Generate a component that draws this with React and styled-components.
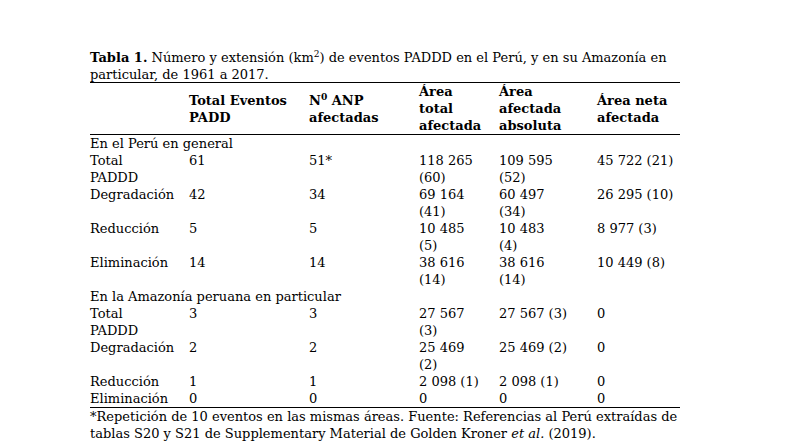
import React from 'react';
import styled, { createGlobalStyle } from 'styled-components';

const GlobalStyle = createGlobalStyle`
  html, body {
    margin: 0;
    padding: 0;
    background: #ffffff;
  }
  body {
    font-family: "DejaVu Serif", serif;
    color: #000;
  }
`;

const columns = [99, 120, 110, 80, 98, 83];

const headers = [
  '',
  'Total Eventos\nPADD',
  null,
  'Área\ntotal\nafectada',
  'Área\nafectada\nabsoluta',
  'Área neta\nafectada',
];

const sections = [
  {
    title: 'En el Perú en general',
    rows: [
      ['Total\nPADDD', '61', '51*', '118 265\n(60)', '109 595\n(52)', '45 722 (21)'],
      ['Degradación', '42', '34', '69 164\n(41)', '60 497\n(34)', '26 295 (10)'],
      ['Reducción', '5', '5', '10 485\n(5)', '10 483\n(4)', '8 977 (3)'],
      ['Eliminación', '14', '14', '38 616\n(14)', '38 616\n(14)', '10 449 (8)'],
    ],
  },
  {
    title: 'En la Amazonía peruana en particular',
    rows: [
      ['Total\nPADDD', '3', '3', '27 567\n(3)', '27 567 (3)', '0'],
      ['Degradación', '2', '2', '25 469\n(2)', '25 469 (2)', '0'],
      ['Reducción', '1', '1', '2 098 (1)', '2 098 (1)', '0'],
      ['Eliminación', '0', '0', '0', '0', '0'],
    ],
  },
];

const Page = styled.div`
  padding: 49px 0 0 90px;
  width: 590px;
  font-size: 13px;
  line-height: 17px;
`;

const Caption = styled.p`
  margin: 0;
  white-space: nowrap;
`;

const Label = styled.strong`
  font-weight: bold;
`;

const Sup = styled.sup`
  font-size: 0.7em;
  line-height: 0;
  vertical-align: 0.55em;
`;

const Table = styled.table`
  border-collapse: collapse;
  table-layout: fixed;
  width: 590px;
  margin-top: -1px;
`;

const HeadRow = styled.tr`
  border-top: 1.5px solid #000;
  border-bottom: 1.5px solid #000;
  height: 52px;
`;

const HeadCell = styled.th`
  padding: 0;
  text-align: left;
  vertical-align: middle;
  font-weight: bold;
  white-space: pre-line;
  line-height: 17px;
`;

const Cell = styled.td`
  padding: 0;
  vertical-align: top;
  white-space: pre-line;
  line-height: 17px;
`;

const SectionCell = styled.td`
  padding: 0;
  line-height: 17px;
  white-space: nowrap;
`;

const LastRow = styled.tr`
  border-bottom: 1.5px solid #000;
`;

const Note = styled.p`
  margin: 0;
  white-space: nowrap;
`;

const App = () => (
  <>
    <GlobalStyle />
    <Page>
      <Caption>
        <Label>Tabla 1.</Label> Número y extensión (km<Sup>2</Sup>) de eventos PADDD en el Perú, y en su Amazonía en
        <br />
        particular, de 1961 a 2017.
      </Caption>
      <Table>
        <colgroup>
          {columns.map((w, i) => (
            <col key={i} style={{ width: w }} />
          ))}
        </colgroup>
        <thead>
          <HeadRow>
            {headers.map((h, i) =>
              h === null ? (
                <HeadCell key={i}>
                  N<Sup>0</Sup> ANP
                  {'\n'}afectadas
                </HeadCell>
              ) : (
                <HeadCell key={i}>{h}</HeadCell>
              )
            )}
          </HeadRow>
        </thead>
        <tbody>
          {sections.map((s, si) => (
            <React.Fragment key={si}>
              <tr>
                <SectionCell colSpan={6}>{s.title}</SectionCell>
              </tr>
              {s.rows.map((r, ri) => {
                const Row = si === sections.length - 1 && ri === s.rows.length - 1 ? LastRow : 'tr';
                return (
                  <Row key={ri}>
                    {r.map((c, ci) => (
                      <Cell key={ci}>{c.replace(/(\d) (\d)/g, '$1\u00a0$2')}</Cell>
                    ))}
                  </Row>
                );
              })}
            </React.Fragment>
          ))}
        </tbody>
      </Table>
      <Note>
        *Repetición de 10 eventos en las mismas áreas. Fuente: Referencias al Perú extraídas de
        <br />
        tablas S20 y S21 de Supplementary Material de Golden Kroner <i>et al.</i> (2019).
      </Note>
    </Page>
  </>
);

export default App;
